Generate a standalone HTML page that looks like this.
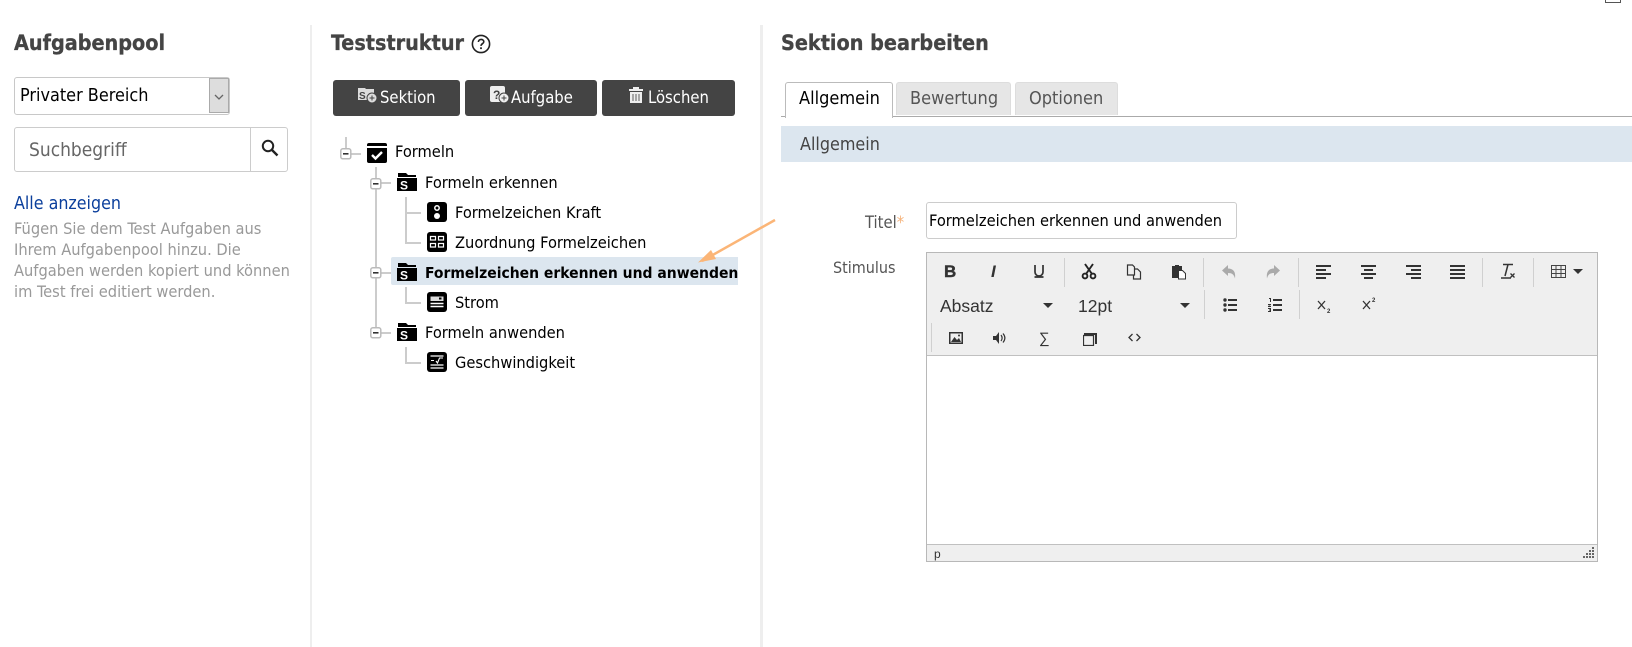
<!DOCTYPE html>
<html lang="de"><head><meta charset="utf-8"><title>Sektion bearbeiten</title>
<style>
html,body{margin:0;padding:0;background:#fff}
body{position:relative;width:1632px;height:647px;overflow:hidden;font-family:"DejaVu Sans","Liberation Sans",sans-serif;font-stretch:condensed;color:#000}
div,span,svg{position:absolute;box-sizing:border-box}
.t{white-space:nowrap;line-height:20px;font-size:16.3px;transform:translateY(1px)}
h2{position:absolute;margin:0;font-size:21.4px;line-height:28px;font-weight:700;color:#444;white-space:nowrap;font-stretch:condensed;-webkit-text-stroke:.3px #444}
.btn{background:#444;border-radius:3px;height:36px;top:80px;color:#fff}
.btn .t{top:7px;font-size:16.5px;color:#fff}
.l{background:#ccc}
.sep{width:1px;background:#d0d0d0;height:29px}
.ed{font-family:"Liberation Sans",sans-serif;font-stretch:normal;font-size:17.5px;color:#333}
.h{color:#999;font-size:16.3px}
</style></head><body>

<div style="left:1605px;top:-12px;width:16px;height:15px;border:1px solid #555"></div>

<div style="left:310px;top:25px;width:2px;height:622px;background:#eee"></div>
<div style="left:760px;top:25px;width:3px;height:622px;background:#eee"></div>

<!-- left -->
<h2 style="left:14px;top:30px">Aufgabenpool</h2>
<div style="left:14px;top:77px;width:216px;height:38px;border:1px solid #c8c8c8;border-radius:3px"></div>
<div style="left:209px;top:78px;width:20px;height:35px;background:#ddd;border:1px solid #aaa"></div>
<svg style="left:209px;top:78px" width="20" height="35"><path d="M6 17l4 4 4-4" fill="none" stroke="#666" stroke-width="1.3"/></svg>
<div class="t" style="left:20px;top:85px;font-size:17.9px">Privater Bereich</div>
<div style="left:14px;top:127px;width:274px;height:45px;border:1px solid #ccc;border-radius:3px"></div>
<div style="left:250px;top:127px;width:1px;height:45px;background:#ccc"></div>
<div class="t" style="left:29px;top:139px;font-size:19px;color:#666">Suchbegriff</div>
<svg style="left:260px;top:138px" width="20" height="20"><circle cx="8" cy="8" r="5.2" fill="none" stroke="#222" stroke-width="2"/><path d="M12 12l5.500 5.500" stroke="#222" stroke-width="2.400"/></svg>
<div class="t" style="left:14px;top:193px;font-size:17.7px;color:#0b3f9c">Alle anzeigen</div>
<div class="t h" style="left:14px;top:218px">Fügen Sie dem Test Aufgaben aus</div>
<div class="t h" style="left:14px;top:239px">Ihrem Aufgabenpool hinzu. Die</div>
<div class="t h" style="left:14px;top:260px">Aufgaben werden kopiert und können</div>
<div class="t h" style="left:14px;top:281px">im Test frei editiert werden.</div>

<!-- middle -->
<h2 style="left:331px;top:30px">Teststruktur</h2>
<svg style="left:471px;top:34px" width="20" height="20"><circle cx="10" cy="10" r="8.600" fill="none" stroke="#222" stroke-width="1.600"/><path d="M7.400 8c0-3.400 5.400-3.400 5.400-.3 0 2-2.800 2-2.800 4.200" fill="none" stroke="#222" stroke-width="1.600"/><rect x="9.100" y="13.300" width="1.800" height="1.800" fill="#222"/></svg>

<div class="btn" style="left:333px;width:127px"><div class="t" style="left:47px">Sektion</div>
<svg style="left:25px;top:6px" width="20" height="20"><path d="M0 2h7l1 1h8v11H0z" fill="#ddd"/><text x="1" y="13" font-size="10" font-weight="700" fill="#444" font-family="Liberation Sans">S</text><circle cx="14" cy="12" r="5" fill="#ddd" stroke="#444"/><path d="M11.500 12h5M14 9.500v5" stroke="#444"/></svg></div>
<div class="btn" style="left:465px;width:132px"><div class="t" style="left:46px">Aufgabe</div>
<svg style="left:25px;top:6px" width="20" height="20"><rect x="0" y="0" width="15" height="16" rx="2" fill="#eee"/><text x="3" y="13" font-size="12" font-weight="700" fill="#444" font-family="Liberation Sans">?</text><circle cx="14" cy="12" r="5" fill="#eee" stroke="#444"/><path d="M11.500 12h5M14 9.500v5" stroke="#444"/></svg></div>
<div class="btn" style="left:602px;width:133px"><div class="t" style="left:46px">Löschen</div>
<svg style="left:26px;top:6px" width="16" height="18"><path d="M1 3h14v2H1zM5 3V1h6v2" fill="#eee"/><path d="M2 6h12v11H2z" fill="#eee"/><path d="M5 8v7M8 8v7M11 8v7" stroke="#777" stroke-width="1.200"/></svg></div>

<!-- tree lines -->
<div class="l" style="left:345px;top:137px;width:2px;height:12px"></div>
<div class="l" style="left:351px;top:153px;width:10px;height:2px"></div>
<div class="l" style="left:375px;top:167px;width:2px;height:160px"></div>
<div class="l" style="left:381px;top:182px;width:10px;height:2px"></div>
<div class="l" style="left:381px;top:272px;width:10px;height:2px"></div>
<div class="l" style="left:381px;top:332px;width:10px;height:2px"></div>
<div class="l" style="left:405px;top:197px;width:2px;height:47px"></div>
<div class="l" style="left:405px;top:212px;width:16px;height:2px"></div>
<div class="l" style="left:405px;top:242px;width:16px;height:2px"></div>
<div class="l" style="left:405px;top:287px;width:2px;height:16px"></div>
<div class="l" style="left:405px;top:302px;width:16px;height:2px"></div>
<div class="l" style="left:405px;top:347px;width:2px;height:16px"></div>
<div class="l" style="left:405px;top:362px;width:16px;height:2px"></div>

<svg style="left:340px;top:148px" width="12" height="12"><rect x=".8" y=".8" width="10" height="10" rx="2" fill="#fff" stroke="#bbb" stroke-width="1.500"/><path d="M3 5.800h5.500" stroke="#333" stroke-width="1.600"/></svg>
<svg style="left:370px;top:178px" width="12" height="12"><rect x=".8" y=".8" width="10" height="10" rx="2" fill="#fff" stroke="#bbb" stroke-width="1.500"/><path d="M3 5.800h5.500" stroke="#333" stroke-width="1.600"/></svg>
<svg style="left:370px;top:267px" width="12" height="12"><rect x=".8" y=".8" width="10" height="10" rx="2" fill="#fff" stroke="#bbb" stroke-width="1.500"/><path d="M3 5.800h5.500" stroke="#333" stroke-width="1.600"/></svg>
<svg style="left:370px;top:327px" width="12" height="12"><rect x=".8" y=".8" width="10" height="10" rx="2" fill="#fff" stroke="#bbb" stroke-width="1.500"/><path d="M3 5.800h5.500" stroke="#333" stroke-width="1.600"/></svg>

<div style="left:391px;top:257px;width:347px;height:28px;background:#dce6ef;border-radius:2px 0 0 2px"></div>

<svg style="left:367px;top:143px" width="20" height="20"><path d="M0 2a2 2 0 012-2h16a2 2 0 012 2v1H0z" fill="#000"/><path d="M0 5h20v13a2 2 0 01-2 2H2a2 2 0 01-2-2z" fill="#000"/><path d="M5 12l3.500 3.500L15 9" fill="none" stroke="#fff" stroke-width="2.400"/></svg>
<div class="t" style="left:395px;top:141px">Formeln</div>

<svg style="left:397px;top:172px" width="20" height="20"><path d="M1 1h8l2 2h8v2H1zM0 6h20v13H0z" fill="#000"/><text x="3" y="17.500" font-size="12" font-weight="700" fill="#fff" font-family="Liberation Sans">S</text></svg>
<div class="t" style="left:425px;top:172px">Formeln erkennen</div>

<svg style="left:427px;top:202px" width="20" height="20"><rect width="20" height="20" rx="3"/><circle cx="10" cy="6" r="2.200" fill="none" stroke="#fff" stroke-width="1.500"/><circle cx="10" cy="14" r="3" fill="#fff"/></svg>
<div class="t" style="left:455px;top:202px">Formelzeichen Kraft</div>

<svg style="left:427px;top:232px" width="20" height="20"><rect width="20" height="20" rx="3"/><path d="M3.500 4.500h5v3.500h-5zM11.500 4.500h5v3.500h-5zM3.500 11.500h5v3.500h-5zM11.500 11.500h5v3.500h-5z" fill="none" stroke="#fff" stroke-width="1.200"/></svg>
<div class="t" style="left:455px;top:232px">Zuordnung Formelzeichen</div>

<svg style="left:397px;top:262px" width="20" height="20"><path d="M1 1h8l2 2h8v2H1zM0 6h20v13H0z" fill="#000"/><text x="3" y="17.500" font-size="12" font-weight="700" fill="#fff" font-family="Liberation Sans">S</text></svg>
<div class="t" style="left:425px;top:262px;font-weight:700;font-size:15.500px">Formelzeichen erkennen und anwenden</div>

<svg style="left:427px;top:292px" width="20" height="20"><rect width="20" height="20" rx="3"/><path d="M3.500 4.500h13v4.500h-13z" fill="#ddd"/><rect x="12" y="5.500" width="2.500" height="2" fill="#000"/><path d="M3.500 11.500h13M3.500 14.500h13" stroke="#fff" stroke-width="1.500"/></svg>
<div class="t" style="left:455px;top:292px">Strom</div>

<svg style="left:397px;top:322px" width="20" height="20"><path d="M1 1h8l2 2h8v2H1zM0 6h20v13H0z" fill="#000"/><text x="3" y="17.500" font-size="12" font-weight="700" fill="#fff" font-family="Liberation Sans">S</text></svg>
<div class="t" style="left:425px;top:322px">Formeln anwenden</div>

<svg style="left:427px;top:352px" width="20" height="20"><rect width="20" height="20" rx="3"/><path d="M3.500 4h13M3.500 16h13M3.500 13h13" stroke="#fff" stroke-width="1.200"/><path d="M4 8.500h3M9 9l1.500 2 2-5h3.500" fill="none" stroke="#fff" stroke-width="1.100"/></svg>
<div class="t" style="left:455px;top:352px">Geschwindigkeit</div>

<!-- right -->
<h2 style="left:781px;top:30px">Sektion bearbeiten</h2>
<div style="left:781px;top:116px;width:851px;height:1px;background:#aaa"></div>
<div style="left:785px;top:82px;width:108px;height:36px;background:#fff;border:1px solid #bbb;border-bottom:0;border-radius:3px 3px 0 0"></div>
<div style="left:896px;top:82px;width:115px;height:33px;background:#e6e6e6;border:1px solid #ddd;border-bottom:0;border-radius:3px 3px 0 0"></div>
<div style="left:1015px;top:82px;width:103px;height:33px;background:#e6e6e6;border:1px solid #ddd;border-bottom:0;border-radius:3px 3px 0 0"></div>
<div class="t" style="left:799px;top:88px;font-size:18px">Allgemein</div>
<div class="t" style="left:910px;top:88px;font-size:18px;color:#555">Bewertung</div>
<div class="t" style="left:1029px;top:88px;font-size:18px;color:#555">Optionen</div>

<div style="left:781px;top:126px;width:851px;height:36px;background:#dce6ef"></div>
<div class="t" style="left:800px;top:134px;font-size:17.800px;color:#444">Allgemein</div>

<div class="t" style="left:865px;top:212px;color:#555;font-size:16.500px">Titel<span style="position:static;color:#f5b27a">*</span></div>
<div style="left:926px;top:202px;width:311px;height:37px;border:1px solid #ccc;border-radius:3px"></div>
<div class="t" style="left:929px;top:210px">Formelzeichen erkennen und anwenden</div>
<div class="t" style="left:833px;top:257px;color:#555;font-size:16px">Stimulus</div>

<!-- editor -->
<div style="left:926px;top:252px;width:672px;height:310px;border:1px solid #b8b8b8;background:#fff"></div>
<div style="left:927px;top:253px;width:670px;height:103px;background:#efefef;border-bottom:1px solid #c0c0c0"></div>
<div style="left:927px;top:544px;width:670px;height:17px;background:#efefef;border-top:1px solid #c0c0c0"></div>
<div class="t" style="left:934px;top:545px;font-size:12px;line-height:16px;font-family:'Liberation Sans',sans-serif;font-stretch:normal;color:#333">p</div>
<svg style="left:1582px;top:545px" width="14" height="15" fill="#666"><path d="M10 2h2v2h-2zM7 5h2v2H7zM10 5h2v2h-2zM4 8h2v2H4zM7 8h2v2H7zM10 8h2v2h-2zM1 11h2v2H1zM4 11h2v2H4zM7 11h2v2H7zM10 11h2v2h-2z"/></svg>

<div class="sep" style="left:1064px;top:258px"></div>
<div class="sep" style="left:1203px;top:258px"></div>
<div class="sep" style="left:1298px;top:258px"></div>
<div class="sep" style="left:1482px;top:258px"></div>
<div class="sep" style="left:1533px;top:258px"></div>
<div class="sep" style="left:1204px;top:290px"></div>
<div class="sep" style="left:1299px;top:290px"></div>
<div class="sep" style="left:931px;top:323px"></div>

<span class="ed" style="left:944px;top:262px;font-weight:700;font-size:17px;line-height:20px;-webkit-text-stroke:.4px #333">B</span>
<span class="ed" style="left:991px;top:262px;font-weight:700;font-style:italic;font-size:17px;line-height:20px;font-family:'Liberation Sans',sans-serif">I</span>
<svg style="left:1032px;top:263px" width="14" height="18"><path d="M3 2v7a4 4 0 008 0V2M2.500 14h9" fill="none" stroke="#333" stroke-width="1.700"/></svg>
<svg style="left:1081px;top:263px" width="16" height="17"><path d="M4 1l7 10M12 1L5 11" stroke="#222" stroke-width="1.900"/><circle cx="4" cy="13" r="2.400" fill="none" stroke="#222" stroke-width="1.900"/><circle cx="12" cy="13" r="2.400" fill="none" stroke="#222" stroke-width="1.900"/></svg>
<svg style="left:1126px;top:264px" width="16" height="16" fill="none" stroke="#333" stroke-width="1.200"><path d="M1.500 1h5l2 2v8h-7zM8.500 5h3l3 3v7h-7v-4"/></svg>
<svg style="left:1171px;top:264px" width="16" height="16"><path d="M1 2h3V1h4v1h3v4H7v8H1z" fill="#333"/><path d="M7.500 6.500h4l3 3v5.500h-7z" fill="#fff" stroke="#333"/></svg>
<svg style="left:1221px;top:264px" width="16" height="16" fill="#aaa"><path d="M7 1v3.500c5 0 8 3 7 10-1-4-3-5.500-7-5.500V12L1 6.500z"/></svg>
<svg style="left:1265px;top:264px" width="16" height="16" fill="#aaa"><path d="M9 1v3.500c-5 0-8 3-7 10 1-4 3-5.500 7-5.500V12l6-5.500z"/></svg>
<svg style="left:1316px;top:265px" width="16" height="14" fill="#333"><path d="M0 0h15v2H0zM0 4h10v2H0zM0 8h15v2H0zM0 12h10v2H0z"/></svg>
<svg style="left:1361px;top:265px" width="16" height="14" fill="#333"><path d="M0 0h15v2H0zM3 4h9v2H3zM0 8h15v2H0zM3 12h9v2H3z"/></svg>
<svg style="left:1406px;top:265px" width="16" height="14" fill="#333"><path d="M0 0h15v2H0zM5 4h10v2H5zM0 8h15v2H0zM5 12h10v2H5z"/></svg>
<svg style="left:1450px;top:265px" width="16" height="14" fill="#333"><path d="M0 0h15v2H0zM0 4h15v2H0zM0 8h15v2H0zM0 12h15v2H0z"/></svg>
<svg style="left:1500px;top:263px" width="16" height="17"><path d="M3 1.500h10M8 1.500L5 13M1 15h10" stroke="#333" stroke-width="1.500" fill="none"/><path d="M10.500 10.500l4 4M14.500 10.500l-4 4" stroke="#333" stroke-width="1.300"/></svg>
<svg style="left:1551px;top:265px" width="15" height="13" fill="none" stroke="#444"><path d="M.5.500h14v12H.5zM.5 4.500h14M.5 8.500h14M5 .5v12M10 .5v12"/></svg>
<svg style="left:1573px;top:269px" width="10" height="6"><path d="M0 0h10L5 5z" fill="#333"/></svg>

<span class="ed" style="left:940px;top:296px;line-height:20px">Absatz</span>
<svg style="left:1043px;top:303px" width="10" height="6"><path d="M0 0h10L5 5z" fill="#333"/></svg>
<span class="ed" style="left:1078px;top:296px;line-height:20px">12pt</span>
<svg style="left:1180px;top:303px" width="10" height="6"><path d="M0 0h10L5 5z" fill="#333"/></svg>
<svg style="left:1223px;top:297px" width="15" height="16" fill="#333"><circle cx="2" cy="3" r="1.700"/><circle cx="2" cy="8" r="1.700"/><circle cx="2" cy="13" r="1.700"/><path d="M5 2h9v2H5zM5 7h9v2H5zM5 12h9v2H5z"/></svg>
<svg style="left:1268px;top:297px" width="15" height="16" fill="#333"><path d="M1 1h2v4H2V2H1zM0 7h3v1L1 9h2v1H0V9l2-1H0zM0 11h3v4H0v-1h2v-.5H1v-1h1V12H0z"/><path d="M5 2h9v2H5zM5 7h9v2H5zM5 12h9v2H5z"/></svg>
<svg style="left:1317px;top:298px" width="16" height="16"><path d="M1 3l7 8M8 3l-7 8" stroke="#333" stroke-width="1.300"/><text x="10" y="15" font-size="6" font-weight="700" font-family="Liberation Sans" fill="#333">2</text></svg>
<svg style="left:1362px;top:296px" width="16" height="16"><path d="M1 5l7 8M8 5l-7 8" stroke="#333" stroke-width="1.300"/><text x="10" y="6" font-size="6" font-weight="700" font-family="Liberation Sans" fill="#333">2</text></svg>

<svg style="left:949px;top:331px" width="15" height="14"><rect width="14" height="12" fill="#333" y="1"/><rect x="1.500" y="2.500" width="11" height="9" fill="#efefef"/><path d="M2 11l3.500-5 2.500 3 2-2 2 4z" fill="#333"/><circle cx="10" cy="4.500" r="1" fill="#333"/></svg>
<svg style="left:993px;top:331px" width="14" height="14"><path d="M0 5h3l3-4v12l-3-4H0z" fill="#333"/><path d="M8 4c1.500 2 1.500 4 0 6M10 2.500c2.500 3 2.500 6 0 9" fill="none" stroke="#333" stroke-width="1.200"/></svg>
<span class="ed" style="left:1039px;top:330px;font-size:15px;line-height:18px;font-family:'Liberation Sans',sans-serif">∑</span>
<svg style="left:1083px;top:332px" width="14" height="14" fill="none" stroke="#333"><path d="M.5 3.500h10v10H.5z" stroke-width="1.200"/><path d="M1 2h12v10" stroke-width="2"/></svg>
<svg style="left:1128px;top:333px" width="13" height="9" fill="none" stroke="#333" stroke-width="1.300"><path d="M4.500 1L1 4.500 4.500 8M8.500 1L12 4.500 8.500 8"/></svg>

<!-- arrow -->
<svg style="left:690px;top:212px" width="95" height="60"><path d="M85 8L12 49" stroke="#fbb577" stroke-width="2.500" fill="none"/><path d="M8 50.500L21 38l5 9z" fill="#fbb577"/></svg>

</body></html>
